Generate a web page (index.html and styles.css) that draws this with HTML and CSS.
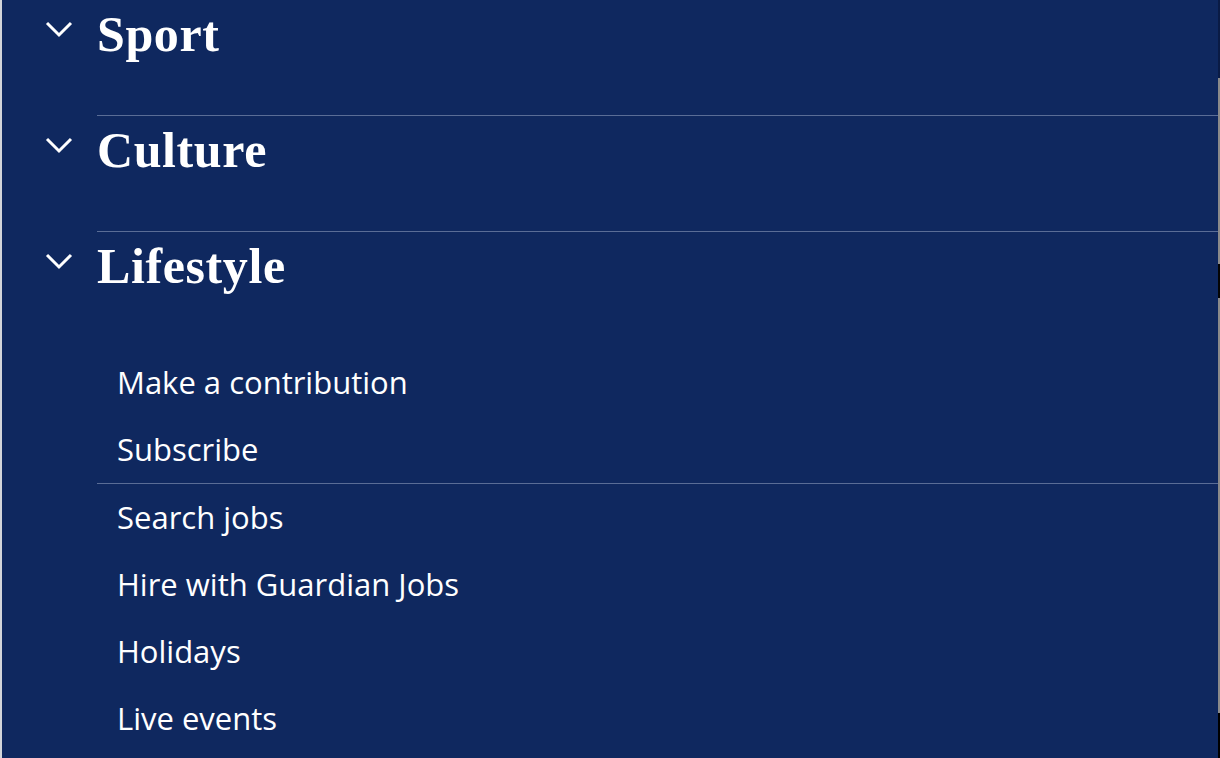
FILE: index.html
```html
<!DOCTYPE html>
<html lang="en">
<head>
<meta charset="utf-8">
<title>Menu</title>
<link rel="stylesheet" href="styles.css">
</head>
<body>
<div class="frame">
  <nav class="menu">
    <ul class="pillars">
      <li class="pillar">
        <span class="chev"><svg width="28" height="18" viewBox="0 0 28 18"><path d="M2 3 L14 15 L26 3" fill="none" stroke="#fff" stroke-width="3"/></svg></span>
        <span class="pillar-label">Sport</span>
      </li>
      <li class="pillar">
        <span class="chev"><svg width="28" height="18" viewBox="0 0 28 18"><path d="M2 3 L14 15 L26 3" fill="none" stroke="#fff" stroke-width="3"/></svg></span>
        <span class="pillar-label">Culture</span>
      </li>
      <li class="pillar last">
        <span class="chev"><svg width="28" height="18" viewBox="0 0 28 18"><path d="M2 3 L14 15 L26 3" fill="none" stroke="#fff" stroke-width="3"/></svg></span>
        <span class="pillar-label">Lifestyle</span>
      </li>
    </ul>
    <ul class="links">
      <li class="link">Make a contribution</li>
      <li class="link">Subscribe</li>
    </ul>
    <ul class="links second">
      <li class="link">Search jobs</li>
      <li class="link">Hire with Guardian Jobs</li>
      <li class="link">Holidays</li>
      <li class="link">Live events</li>
    </ul>
  </nav>
  <div class="edge"></div>
</div>
</body>
</html>
```
FILE: styles.css
```css
html, body {
  margin: 0;
  padding: 0;
  background: #0f285f;
  height: 100%;
  overflow: hidden;
}
.frame {
  display: flex;
  height: 758px;
  border-left: 2px solid #d3d5da;
  box-sizing: border-box;
}
.menu {
  flex: 1;
  background: #0f285f;
  color: #fff;
}
.edge {
  width: 2px;
  background: linear-gradient(to bottom,
    #0a1b45 0, #0a1b45 78px,
    #8a8a8a 78px, #8a8a8a 264px,
    #050505 264px, #050505 298px,
    #8a8a8a 298px, #8a8a8a 713px,
    #000 713px, #000 758px);
}
ul {
  list-style: none;
  margin: 0;
  padding: 0;
}
.pillar {
  display: flex;
  height: 116px;
}
.chev {
  width: 95px;
  flex: none;
  display: flex;
  justify-content: flex-start;
  padding-left: 43px;
  padding-top: 20px;
  box-sizing: border-box;
}
.chev svg {
  display: block;
}
.pillar-label {
  flex: 1;
  font-family: "Liberation Serif", "Times New Roman", serif;
  font-weight: 700;
  font-size: 50px;
  line-height: 50px;
  padding-top: 9px;
  border-bottom: 1px solid #5a6d96;
  letter-spacing: 0.6px;
}
.pillar.last .pillar-label {
  border-bottom: none;
}
.links {
  margin-left: 95px;
  padding-left: 20px;
  padding-top: 1px;
  font-family: "Open Sans", "Noto Sans", sans-serif;
  font-size: 31px;
}
.links.second {
  border-top: 1px solid #5a6d96;
  padding-top: 0;
}
.link {
  line-height: 67px;
}
```
